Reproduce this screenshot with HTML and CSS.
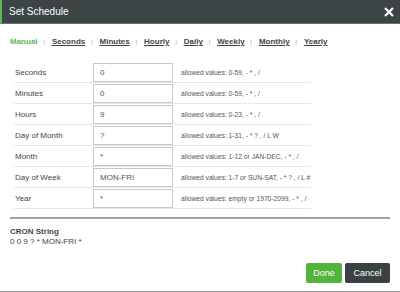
FILE: index.html
```html
<!DOCTYPE html>
<html>
  <head>
    <meta charset="utf-8" />
    <title>Set Schedule</title>
    <meta name="viewport" content="width=device-width, initial-scale=1" />
    <link rel="stylesheet" href="styles.css">
  </head>
  <body>
    <div class="modal">
      <div class="modal-header">
        <span class="title">Set Schedule</span>
        <button class="close" type="button" aria-label="Close">
          <svg width="10" height="10" viewBox="0 0 10 10">
            <path d="M1 1 L9 9 M9 1 L1 9" stroke="#fff" stroke-width="2.2" fill="none" />
          </svg>
        </button>
      </div>

      <div class="modal-body">
        <div class="tabs">
          <a class="tab active">Manual</a><span class="sep">|</span>
          <a class="tab" href="#">Seconds</a><span class="sep">|</span>
          <a class="tab" href="#">Minutes</a><span class="sep">|</span>
          <a class="tab" href="#">Hourly</a><span class="sep">|</span>
          <a class="tab" href="#">Daily</a><span class="sep">|</span>
          <a class="tab" href="#">Weekly</a><span class="sep">|</span>
          <a class="tab" href="#">Monthly</a><span class="sep">|</span>
          <a class="tab" href="#">Yearly</a>
        </div>

        <table class="fields">
          <tr>
            <td class="name">Seconds</td>
            <td class="field"><input type="text" value="0" /></td>
            <td class="hint">allowed values: 0-59, - * , /</td>
          </tr>
          <tr>
            <td class="name">Minutes</td>
            <td class="field"><input type="text" value="0" /></td>
            <td class="hint">allowed values: 0-59, - * , /</td>
          </tr>
          <tr>
            <td class="name">Hours</td>
            <td class="field"><input type="text" value="9" /></td>
            <td class="hint">allowed values: 0-23, - * , /</td>
          </tr>
          <tr>
            <td class="name">Day of Month</td>
            <td class="field"><input type="text" value="?" /></td>
            <td class="hint">allowed values: 1-31, - * ? , / L W</td>
          </tr>
          <tr>
            <td class="name">Month</td>
            <td class="field"><input type="text" value="*" /></td>
            <td class="hint">allowed values: 1-12 or JAN-DEC, - * , /</td>
          </tr>
          <tr>
            <td class="name">Day of Week</td>
            <td class="field"><input type="text" value="MON-FRI" /></td>
            <td class="hint">allowed values: 1-7 or SUN-SAT, - * ? , / L #</td>
          </tr>
          <tr>
            <td class="name">Year</td>
            <td class="field"><input type="text" value="*" /></td>
            <td class="hint">allowed values: empty or 1970-2099, - * , /</td>
          </tr>
        </table>

        <div class="cron">
          <div class="cron-label">CRON String</div>
          <div class="cron-value">0 0 9 ? * MON-FRI *</div>
        </div>
      </div>

      <div class="modal-footer">
        <button class="btn done" type="button">Done</button>
        <button class="btn cancel" type="button">Cancel</button>
      </div>
    </div>
  </body>
</html>
```

FILE: styles.css
```css
body {
  margin: 0;
  font-family: "Liberation Sans", Arial, sans-serif;
  background: #fff;
  color: #444;
}

.modal {
  width: 400px;
  height: 292px;
  box-sizing: border-box;
  border-bottom: 1px solid #9a9a9a;
  display: flex;
  flex-direction: column;
}

.modal-header {
  height: 23px;
  background-color: #3c4446;
  border-left: 2px solid #5cb85c;
  border-bottom: 1px solid #6c7274;
  display: flex;
  align-items: center;
  justify-content: space-between;
  padding: 0 6px 0 7px;
}

.title {
  color: #fff;
  font-size: 10px;
}

.close {
  background: none;
  border: 0;
  padding: 0;
  display: flex;
  cursor: pointer;
}

.modal-body {
  flex: 1;
  padding: 0 10px;
}

.tabs {
  margin-top: 13px;
  font-size: 8px;
  font-weight: bold;
  line-height: 10px;
  display: flex;
  align-items: center;
}

.tab {
  color: #444;
  text-decoration: underline;
}

.tab.active {
  color: #5cb85c;
  text-decoration: none;
}

.sep {
  color: #888;
  font-size: 5px;
  font-weight: normal;
  margin: 0 7px 0 6px;
}

.fields {
  margin-top: 15px;
  margin-left: 4px;
  width: 297px;
  border-collapse: collapse;
}

.fields td {
  padding: 1px 0 0 0;
  border-bottom: 1px solid #e8e8e8;
  vertical-align: middle;
}

.fields .name {
  width: 78px;
  padding-left: 1px;
  font-size: 8px;
  color: #444;
}

.fields .field {
  width: 88px;
}

.fields input {
  display: block;
  box-sizing: border-box;
  width: 80px;
  height: 19px;
  margin: 0;
  padding: 0 6px;
  border: 1px solid #c8c8c8;
  font-family: "Liberation Sans", Arial, sans-serif;
  font-size: 8px;
  color: #555;
}

.fields .hint {
  font-size: 6.7px;
  color: #555;
}

.cron {
  margin-top: 8px;
  border-top: 2px solid #a0a0a0;
  padding-top: 8px;
  font-size: 8px;
  line-height: 10px;
}

.cron-label {
  font-weight: bold;
}

.modal-footer {
  display: flex;
  justify-content: flex-end;
  gap: 3px;
  padding: 0 10px 8px 0;
}

.btn {
  height: 20px;
  border: 0;
  border-radius: 2px;
  color: #fff;
  font-family: "Liberation Sans", Arial, sans-serif;
  font-size: 9px;
  padding: 0;
}

.done {
  width: 36px;
  background-color: #53b43c;
}

.cancel {
  width: 45px;
  background-color: #3a4244;
}
```
